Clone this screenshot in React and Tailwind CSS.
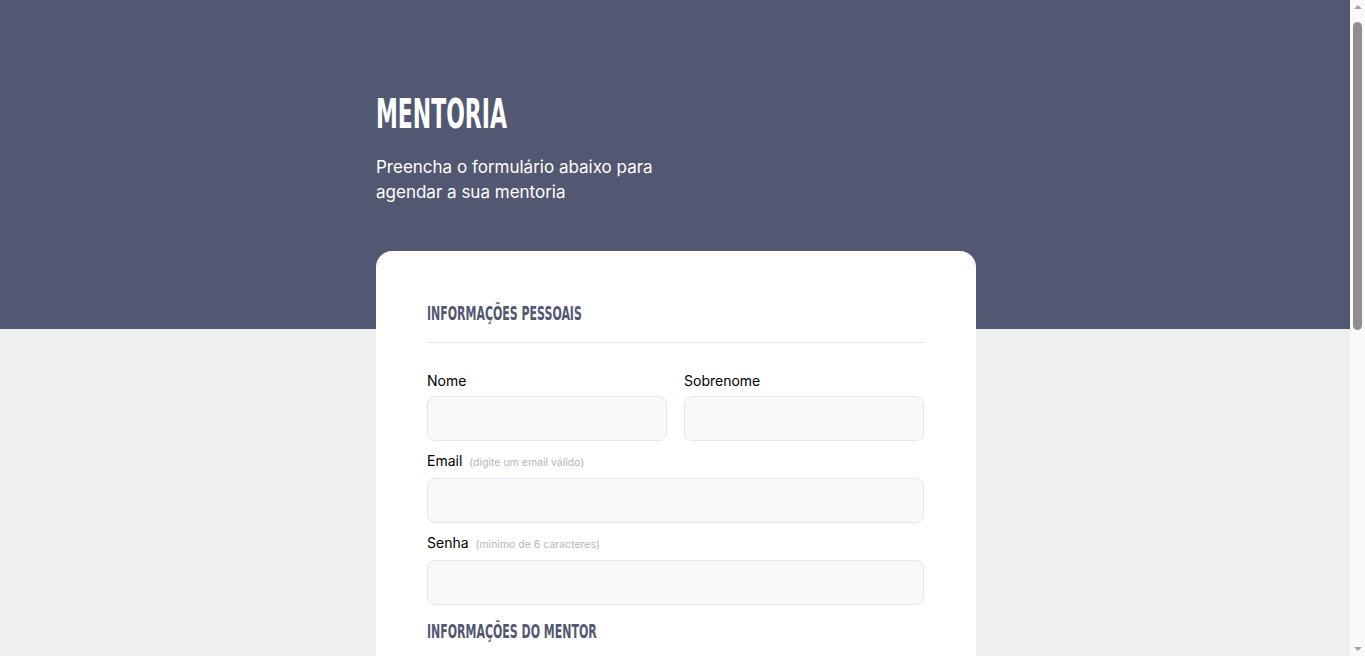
import { useState } from 'react';

const heading = "font-['Liberation_Sans_Narrow','DejaVu_Sans_Condensed','DejaVu_Sans',sans-serif]";

const Field = ({ label, hint, type = 'text' }) => (
  <div className="flex flex-col">
    <label className="text-[14px] text-black mb-[6px] leading-[18px] flex items-baseline">
      {label}
      {hint && <span className="ml-[7px] text-[10.5px] text-[#b5b5bd]">{hint}</span>}
    </label>
    <input
      type={type}
      className="h-[45px] w-full rounded-[8px] border border-[#e6e7ec] bg-[#f8f9fb] px-3 text-[14px] outline-none"
    />
  </div>
);

const SectionTitle = ({ children }) => (
  <div className="border-b border-[#e3e4e8] pb-[16px] mb-[29px]">
    <h3 className={`${heading} inline-block origin-left scale-x-[0.61] font-bold text-[20px] leading-[24px] text-[#535872] uppercase whitespace-nowrap`}>
      {children}
    </h3>
  </div>
);

export default function App() {
  const [mentor, setMentor] = useState('');

  return (
    <div className="min-h-screen bg-[#efefef] font-['Inter','Open_Sans',sans-serif] pr-[13px]">
      {/* topo */}
      <header className="bg-[#535872] h-[329px]">
        <div className="w-[600px] mx-auto pt-[96px]">
          <h1 className={`${heading} inline-block origin-left scale-x-[0.61] font-bold text-[40px] leading-[36px] text-white whitespace-nowrap`}>
            MENTORIA
          </h1>
          <p className="mt-[21px] w-[300px] text-[17px] leading-[25px] text-white">
            Preencha o formulário abaixo para agendar a sua mentoria
          </p>
        </div>
      </header>

      {/* formulário */}
      <main className="w-[600px] mx-auto -mt-[78px] pb-20">
        <form className="bg-white rounded-[16px] pl-[51px] pr-[52px] pt-[50px] pb-[51px]">
          <SectionTitle>Informações pessoais</SectionTitle>

          <div className="flex flex-col gap-[11px]">
            <div className="grid grid-cols-2 gap-[17px]">
              <Field label="Nome" />
              <Field label="Sobrenome" />
            </div>
            <Field label="Email" hint="(digite um email válido)" type="email" />
            <Field label="Senha" hint="(mínimo de 6 caracteres)" type="password" />
          </div>

          <div className="mt-[14px]">
            <SectionTitle>Informações do mentor</SectionTitle>
            <div className="flex flex-col gap-[11px]">
              <div className="flex flex-col">
                <label className="text-[14px] text-black mb-[6px] leading-[18px]">Mentor</label>
                <select
                  value={mentor}
                  onChange={(e) => setMentor(e.target.value)}
                  className="h-[45px] w-full rounded-[8px] border border-[#e6e7ec] bg-[#f8f9fb] px-3 text-[14px] text-[#8a8c99] outline-none"
                >
                  <option value="">Selecione</option>
                  <option value="1">Mentor 1</option>
                  <option value="2">Mentor 2</option>
                </select>
              </div>
              <Field label="Email do mentor" />
              <div className="grid grid-cols-2 gap-[17px]">
                <Field label="Data" type="date" />
                <Field label="Horário" type="time" />
              </div>
            </div>
          </div>

          <div className="mt-[30px]">
            <SectionTitle>Informações da mentoria</SectionTitle>
            <div className="flex flex-col gap-[11px]">
              <Field label="Assunto" />
              <div className="flex flex-col">
                <label className="text-[14px] text-black mb-[6px] leading-[18px]">Observações</label>
                <textarea className="h-[120px] w-full rounded-[8px] border border-[#e6e7ec] bg-[#f8f9fb] p-3 text-[14px] outline-none resize-none" />
              </div>
            </div>
          </div>

          <button
            type="button"
            className="mt-[30px] w-full h-[50px] rounded-[8px] bg-[#535872] text-white font-semibold text-[16px]"
          >
            Enviar formulário
          </button>
        </form>
      </main>

      {/* barra de rolagem */}
      <div className="fixed right-0 top-0 h-screen w-[15px] bg-[#f9f9f9] flex flex-col items-center">
        <div className="h-[14px] flex items-center">
          <div className="w-0 h-0 border-x-[4px] border-x-transparent border-b-[4px] border-b-[#a3a3a3]" />
        </div>
        <div className="mt-[8px] w-[9px] h-[308px] rounded-full bg-[#8f8f8f]" />
        <div className="mt-auto h-[14px] flex items-center">
          <div className="w-0 h-0 border-x-[4px] border-x-transparent border-t-[4px] border-t-[#a3a3a3]" />
        </div>
      </div>
    </div>
  );
}
